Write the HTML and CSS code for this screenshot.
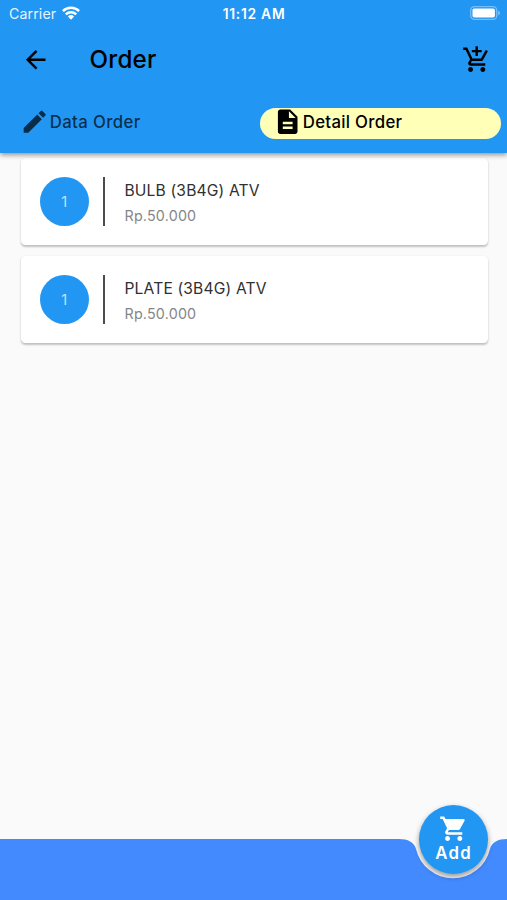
FILE: index.html
```html
<!DOCTYPE html>
<html lang="en">
<head>
<meta charset="utf-8">
<title>Order</title>
<link rel="stylesheet" href="styles.css">
</head>
<body>
<div class="screen">
  <header class="header">
    <div class="status">
      <div class="carrier"><span class="carrier-name">Carrier</span>
        <svg class="wifi" viewBox="0 0 18 14"><g fill="none" stroke="#fff" stroke-width="2.5"><path d="M.9 5.1a11.5 11.5 0 0 1 16.2 0"/><path d="M3.8 8.3a7.4 7.4 0 0 1 10.4 0"/></g><path fill="#fff" d="M5.9 10.4a4.4 4.4 0 0 1 6.2 0L9 13.7z"/></svg>
      </div>
      <span class="time">11:12 AM</span>
      <svg class="battery" viewBox="0 0 31 14"><rect x=".7" y=".7" width="26" height="12.6" rx="3.6" fill="none" stroke="#fff" stroke-opacity=".38" stroke-width="1.3"/><rect x="2.5" y="2.5" width="22.4" height="9" rx="1.8" fill="#fff"/><path d="M28.3 4.7c2 .7 2 3.9 0 4.6z" fill="#fff" fill-opacity=".5"/></svg>
    </div>
    <div class="toolbar">
      <svg class="icon" viewBox="0 0 24 24"><path d="M20 11H7.83l5.59-5.59L12 4l-8 8 8 8 1.41-1.41L7.83 13H20v-2z"/></svg>
      <h1 class="title">Order</h1>
      <svg class="icon" viewBox="0 0 24 24"><path d="M11 9h2V6h3V4h-3V1h-2v3H8v2h3v3zm-4 9c-1.1 0-1.99.9-1.99 2S5.9 22 7 22s2-.9 2-2-.9-2-2-2zm10 0c-1.1 0-1.99.9-1.99 2s.89 2 1.99 2 2-.9 2-2-.9-2-2-2zm-9.83-3.25l.03-.12.9-1.63h7.45c.75 0 1.41-.41 1.75-1.03l3.86-7.01L19.42 4h-.01l-1.1 2-2.76 5H8.53l-.13-.27L6.16 6l-.95-2-.94-2H1v2h2l3.6 7.59-1.35 2.45c-.16.28-.25.61-.25.96 0 1.1.9 2 2 2h12v-2H7.42c-.13 0-.25-.11-.25-.25z"/></svg>
    </div>
    <nav class="tabs">
      <div class="tab"><svg class="icon" viewBox="0 0 24 24"><path d="M3 17.25V21h3.75L17.81 9.94l-3.75-3.75L3 17.25zM20.71 7.04c.39-.39.39-1.02 0-1.41l-2.34-2.34c-.39-.39-1.02-.39-1.41 0l-1.83 1.83 3.75 3.75 1.83-1.83z"/></svg><span>Data Order</span></div>
      <div class="tab active"><svg class="icon" viewBox="0 0 24 24"><path d="M14 2H6c-1.1 0-1.99.9-1.99 2L4 20c0 1.1.89 2 1.99 2H18c1.1 0 2-.9 2-2V8l-6-6zm2 16H8v-2h8v2zm0-4H8v-2h8v2zm-3-5V3.5L18.5 9H13z"/></svg><span>Detail Order</span></div>
    </nav>
  </header>
  <main class="list">
    <article class="card">
      <div class="qty">1</div>
      <div class="info"><div class="name">BULB (3B4G) ATV</div><div class="price">Rp.50.000</div></div>
    </article>
    <article class="card">
      <div class="qty">1</div>
      <div class="info"><div class="name">PLATE (3B4G) ATV</div><div class="price">Rp.50.000</div></div>
    </article>
  </main>
  <footer class="bottom">
    <svg class="bar" viewBox="0 0 507 61"><path fill="#448aff" d="M0 0H399C408 0 414 3 416 10A38 38 0 0 0 490 10C492 3 498 0 507 0V61H0Z"/></svg>
    <button class="fab"><svg class="icon" viewBox="0 0 24 24"><path d="M7 18c-1.1 0-1.99.9-1.99 2S5.9 22 7 22s2-.9 2-2-.9-2-2-2zM1 2v2h2l3.6 7.59-1.35 2.45c-.16.28-.25.61-.25.96 0 1.1.9 2 2 2h12v-2H7.42c-.14 0-.25-.11-.25-.25l.03-.12.9-1.63h7.45c.75 0 1.41-.41 1.75-1.03l3.58-6.49A1 1 0 0 0 20 4H5.21l-.94-2H1zm16 16c-1.1 0-1.99.9-1.99 2s.89 2 1.99 2 2-.9 2-2-.9-2-2-2z"/></svg><span>Add</span></button>
  </footer>
</div>
</body>
</html>
```
FILE: styles.css
```css
* { box-sizing: border-box; }
body { margin: 0; font-family: Inter, "Liberation Sans", sans-serif; }
.screen { width: 507px; height: 900px; display: flex; flex-direction: column; background: #fafafa; overflow: hidden; }
.icon { display: block; flex: none; width: 29.4px; height: 29.4px; fill: currentColor; }
.header { flex: none; height: 152.5px; background: #2196f3; box-shadow: 0 2px 5px rgba(0,0,0,.42); position: relative; z-index: 1; }
.status { height: 27px; padding: 0 6px 0 9px; display: grid; grid-template-columns: 1fr auto 1fr; align-items: center; color: #fff; }
.carrier { display: flex; align-items: center; gap: 6px; font-size: 14.2px; letter-spacing: .1px; color: #e6f4ff; }
.wifi { width: 18px; height: 14px; margin-top: -2px; }
.time { font-size: 13.8px; font-weight: 600; letter-spacing: .75px; position: relative; left: -1px; }
.battery { width: 31px; height: 14px; justify-self: end; margin-top: -1px; }
.toolbar { height: 65px; display: flex; align-items: center; padding: 0 15.5px 0 20.6px; }
.title { flex: 1; margin: 0 0 0 39.5px; font-size: 24.2px; font-weight: 500; line-height: 30px; letter-spacing: .25px; }
.tabs { display: grid; grid-template-columns: 241px 241px; column-gap: 13px; padding: 15.5px 6px 0; }
.tab { height: 31px; border-radius: 16px; display: flex; align-items: center; padding: 0 0 2.6px 14.4px; font-size: 16.8px; font-weight: 500; letter-spacing: .35px; color: rgba(0,0,0,.7); }
.tab span { line-height: 20px; }
.active { background: #ffffb8; color: #000; letter-spacing: .3px; }
.active .icon { margin-left: -1px; }
.list { flex: 1; padding: 5px 19.5px 0 20.5px; display: flex; flex-direction: column; gap: 11px; }
.card { height: 87px; border-radius: 4.5px; background: #fff; box-shadow: 0 1.5px 2px rgba(0,0,0,.2), 0 1px 3px rgba(0,0,0,.06); display: flex; align-items: flex-start; padding: 19px 20px 0 19.3px; }
.qty { width: 49px; height: 49px; border-radius: 50%; background: #2196f3; color: #c4e2fb; display: flex; align-items: center; justify-content: center; font-size: 14.5px; }
.info { height: 49px; margin-left: 14.2px; border-left: 2px solid #4b4b4b; padding: 3.5px 0 0 19.5px; }
.name { font-size: 15.6px; line-height: 22px; letter-spacing: .16px; color: #303030; white-space: nowrap; }
.price { margin-top: 2.5px; font-size: 14.3px; line-height: 21px; letter-spacing: .2px; color: #868686; }
.bottom { flex: none; height: 61px; position: relative; }
.bar { display: block; width: 507px; height: 61px; }
.fab { position: absolute; left: 418.7px; top: -34.5px; width: 69px; height: 69px; border: 0; border-radius: 50%; padding: 9px 0 0 1px; background: #2196f3; color: #fff; box-shadow: 0 3px 5px rgba(0,0,0,.3), 0 2px 7px rgba(0,0,0,.12); display: flex; flex-direction: column; align-items: center; font: 600 16.8px/20px Inter, sans-serif; letter-spacing: 1.3px; }
```
